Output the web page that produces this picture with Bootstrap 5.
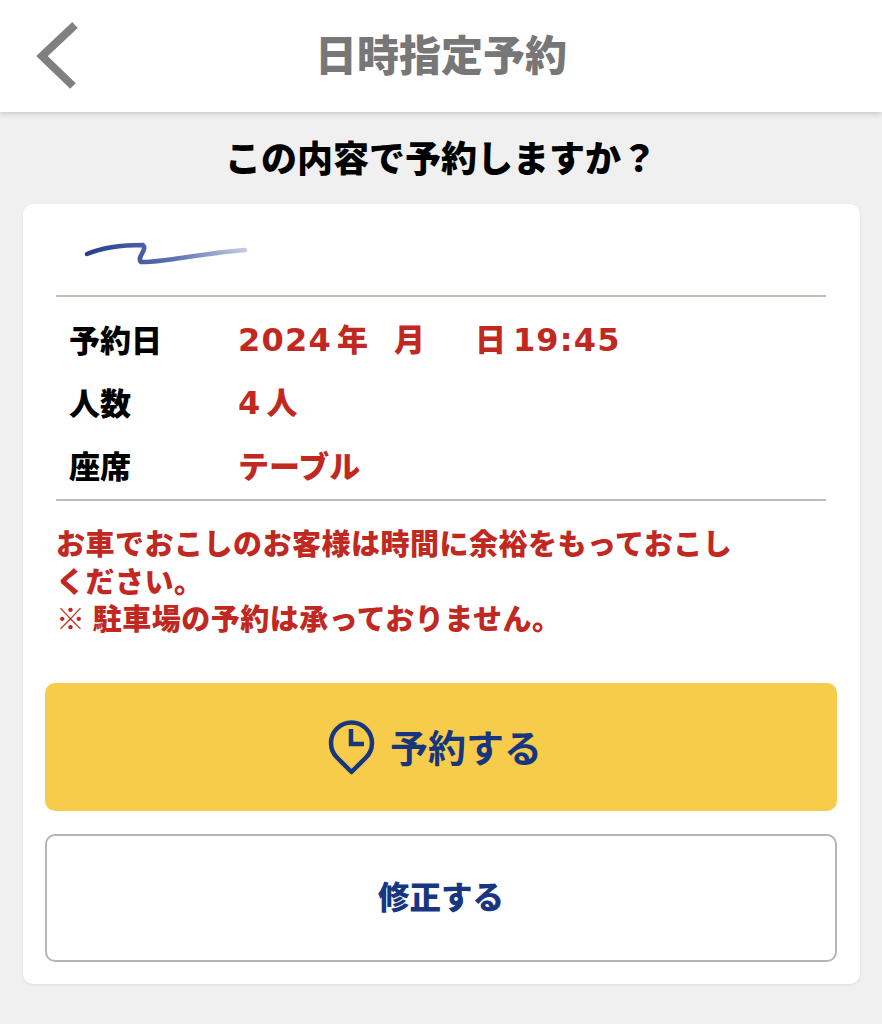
<!doctype html>
<html lang="ja"><head><meta charset="utf-8">
<link href="https://cdn.jsdelivr.net/npm/bootstrap@5.3.0/dist/css/bootstrap.min.css" rel="stylesheet">
<style>
html,body{height:100%}
body{background:#f0f0f0;font-family:"Noto Sans CJK JP","Liberation Sans",sans-serif;font-weight:900;color:#000}
.topbar{height:112px;background:#fff;box-shadow:0 2px 5px rgba(0,0,0,.16);position:relative;color:#777;font-size:42px;padding-bottom:8px}
.backicon{position:absolute;left:33px;top:21px}
.asktitle{font-size:36px;height:92px;line-height:88px;text-align:center}
.sheet{margin:0 22px 0 23px;background:#fff;border-radius:10px;padding:0 23px 23px 22px;height:780px;box-shadow:0 1px 3px rgba(0,0,0,.08)}
.scribble{height:93px;margin:0 11px;border-bottom:2px solid #c2bdb2}
.facts{margin:0 11px;padding:11px 13px 0;border-bottom:2px solid #c2bdb2;height:204px;font-size:31px}
.factrow{height:63px;align-items:center}
.factlabel{width:169px}
.redtext{color:#c1281f}
.digits{font-family:"DejaVu Sans",sans-serif;font-weight:700;font-size:32px;letter-spacing:1.2px}
.digitgap{margin-right:5px}
.monthslot{margin-left:26px}
.dayslot{margin-left:50px;margin-right:7px}
.note{margin:23px 11px 0;padding-right:80px;font-size:29px;line-height:37.5px;height:159px;letter-spacing:.5px}
.reserve{height:128px;background:#f7cc4a;border-radius:10px;color:#17367f;font-size:38px;font-weight:700;gap:15px;padding-right:12px}
.reservelabel{padding-bottom:4px}
.fix{height:128px;margin-top:23px;padding-bottom:4px;border:2px solid #b5b5b5;border-radius:10px;color:#17367f;font-size:31.5px;background:#fff}
</style></head><body>
<div class="topbar d-flex align-items-center justify-content-center">
<svg class="backicon" width="46" height="70" viewBox="0 0 46 70"><path d="M42 4 L9 35 L40 65" fill="none" stroke="#808080" stroke-width="8"/></svg>
<span>日時指定予約</span></div>
<div class="asktitle">この内容で予約しますか？</div>
<div class="sheet">
<div class="scribble d-flex align-items-center">
<svg width="200" height="40" viewBox="0 0 200 40"><defs><linearGradient id="inkfade" gradientUnits="userSpaceOnUse" x1="31" y1="0" x2="189" y2="0"><stop offset="0" stop-color="#25408f"/><stop offset=".55" stop-color="#5d70b0"/><stop offset="1" stop-color="#c4cbe2"/></linearGradient></defs><path d="M31 24 C45 18 65 15 87 15 C92 20 80 27 85 32 C105 33 140 24 189 20" fill="none" stroke="url(#inkfade)" stroke-width="4.5" stroke-linecap="round"/></svg>
</div>
<div class="facts">
<div class="d-flex factrow"><div class="factlabel">予約日</div><div class="redtext"><span class="digits digitgap">2024</span>年<span class="monthslot">月</span><span class="dayslot">日</span><span class="digits">19:45</span></div></div>
<div class="d-flex factrow"><div class="factlabel">人数</div><div class="redtext"><span class="digits digitgap">4</span>人</div></div>
<div class="d-flex factrow"><div class="factlabel">座席</div><div class="redtext">テーブル</div></div>
</div>
<div class="note redtext">お車でおこしのお客様は時間に余裕をもっておこしください。<br>※ 駐車場の予約は承っておりません。</div>
<div class="reserve d-flex align-items-center justify-content-center">
<svg width="47" height="56" viewBox="0 0 47 56"><path d="M23.5 53 L9 38.5 A20.5 20.5 0 1 1 38 38.5 Z" fill="none" stroke="#17367f" stroke-width="4.5" stroke-linejoin="round"/><path d="M23 10 V25 H36" fill="none" stroke="#17367f" stroke-width="4.5"/></svg>
<span class="reservelabel">予約する</span></div>
<div class="fix d-flex align-items-center justify-content-center">修正する</div>
</div>
<script src="https://cdn.jsdelivr.net/npm/bootstrap@5.3.0/dist/js/bootstrap.bundle.min.js"></script>
</body></html>
